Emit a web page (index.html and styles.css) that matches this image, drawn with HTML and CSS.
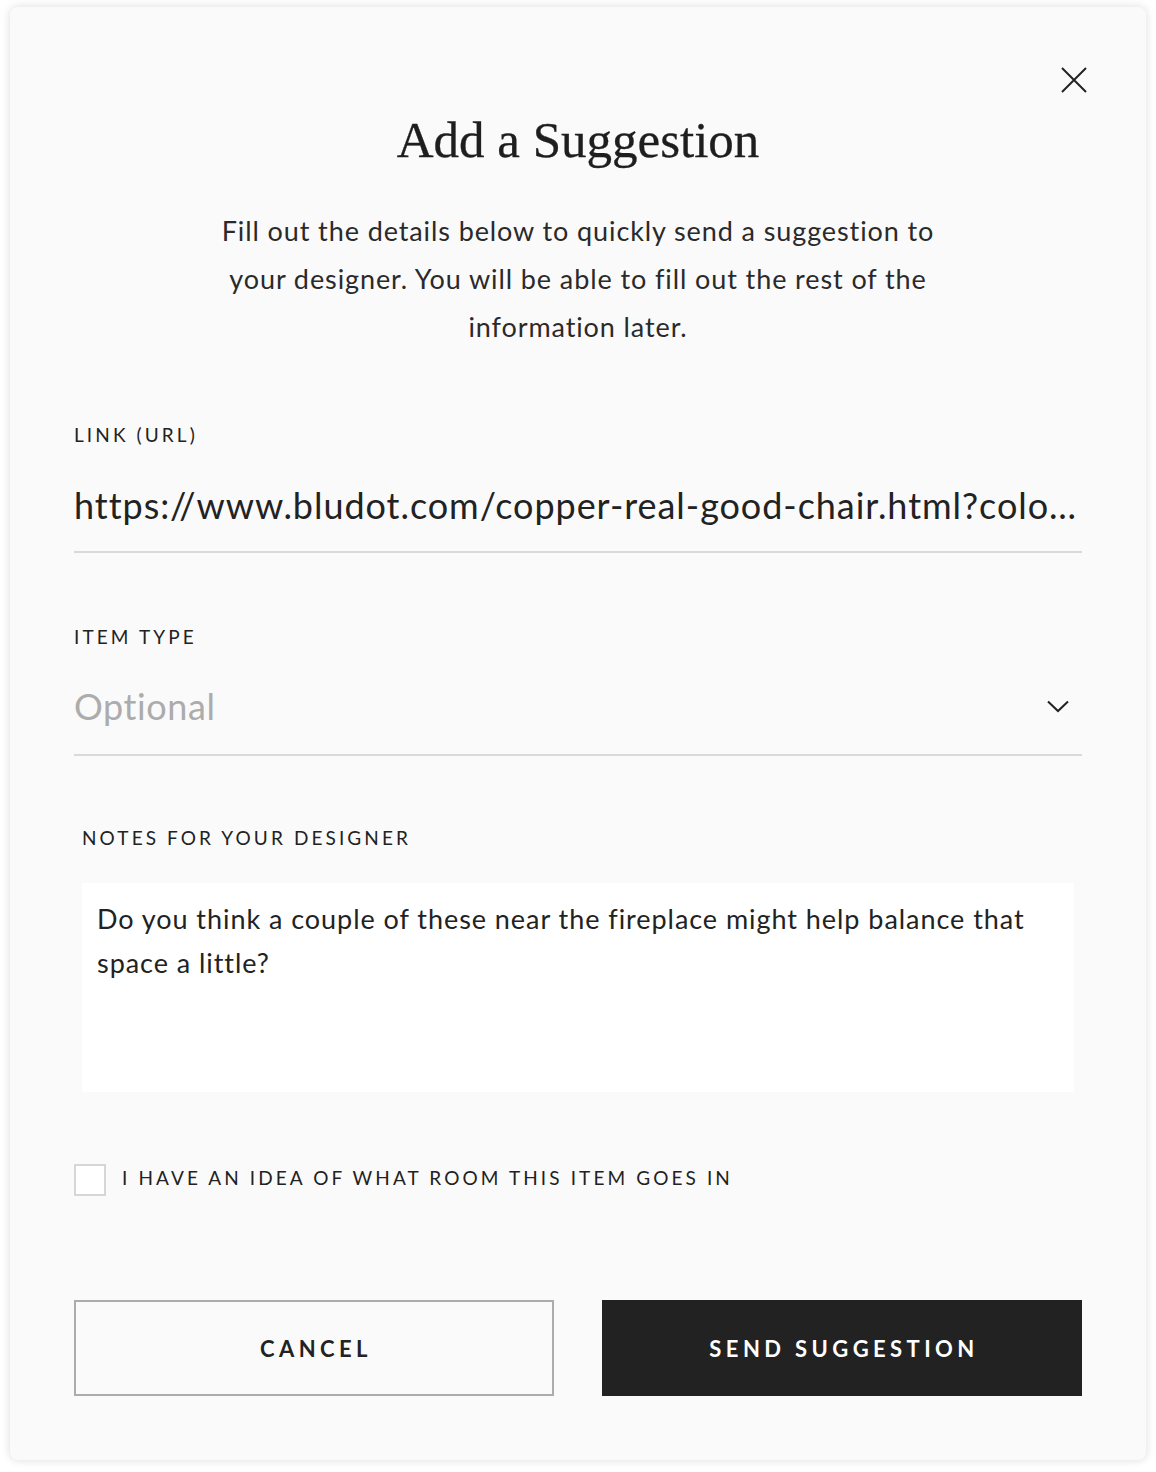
FILE: index.html
```html
<!DOCTYPE html>
<html lang="en">
<head>
<meta charset="utf-8">
<title>Add a Suggestion</title>
<link rel="stylesheet" href="styles.css">
</head>
<body>
<div class="modal">
  <button class="close" aria-label="Close">
    <svg width="26" height="26" viewBox="0 0 26 26"><path d="M1 1 L25 25 M25 1 L1 25" stroke="#222" stroke-width="2" fill="none"/></svg>
  </button>
  <h1 class="title">Add a Suggestion</h1>
  <p class="intro">Fill out the details below to quickly send a suggestion to your designer. You will be able to fill out the rest of the information later.</p>

  <div class="field">
    <div class="label">LINK (URL)</div>
    <div class="input">https://www.bludot.com/copper-real-good-chair.html?color=copper&amp;size=standard</div>
  </div>

  <div class="field field-type">
    <div class="label">ITEM TYPE</div>
    <div class="input select">
      <span class="placeholder">Optional</span>
      <svg class="chevron" width="22" height="13" viewBox="0 0 22 13"><path d="M1 1.5 L11 11 L21 1.5" stroke="#222" stroke-width="2" fill="none"/></svg>
    </div>
  </div>

  <div class="notes">
    <div class="label">NOTES FOR YOUR DESIGNER</div>
    <div class="textarea">Do you think a couple of these near the fireplace might help balance that space a little?</div>
  </div>

  <label class="check">
    <span class="box"></span>
    <span class="check-text">I HAVE AN IDEA OF WHAT ROOM THIS ITEM GOES IN</span>
  </label>

  <div class="actions">
    <button class="btn btn-outline">CANCEL</button>
    <button class="btn btn-solid">SEND SUGGESTION</button>
  </div>
</div>
</body>
</html>
```

FILE: styles.css
```css
html, body {
  margin: 0;
  padding: 0;
  background: #ffffff;
}
body {
  padding: 7px 10px 12px 10px;
  font-family: Lato, "Noto Sans", sans-serif;
  color: #222;
}
.modal {
  position: relative;
  box-sizing: border-box;
  width: 1136px;
  height: 1453px;
  background: #fafafa;
  border-radius: 8px;
  box-shadow: 0 0 10px rgba(0,0,0,0.14);
  padding: 103px 64px 64px 64px;
  display: flex;
  flex-direction: column;
}
.close {
  position: absolute;
  top: 60px;
  right: 59px;
  width: 26px;
  height: 26px;
  padding: 0;
  border: 0;
  background: none;
  display: block;
}
.close svg { display: block; }
.title {
  margin: 0;
  font-family: "Liberation Serif", serif;
  font-weight: 400;
  font-size: 51px;
  line-height: 60px;
  text-align: center;
  color: #1e1e1e;
  -webkit-text-stroke: 0.3px #1e1e1e;
}
.intro {
  margin: 37px auto 0 auto;
  width: 740px;
  font-size: 27px;
  letter-spacing: 0.9px;
  line-height: 48px;
  text-align: center;
  color: #2a2a2a;
}
.field {
  margin-top: 72px;
}
.field-type {
  margin-top: 72px;
}
.label {
  font-size: 19px;
  line-height: 24px;
  letter-spacing: 3.1px;
  color: #222;
}
.input {
  margin-top: 36px;
  font-size: 36px;
  letter-spacing: 0.95px;
  line-height: 44px;
  padding-bottom: 24px;
  border-bottom: 2px solid #d9d9d9;
  white-space: nowrap;
  overflow: hidden;
  text-overflow: ellipsis;
  color: #222;
}
.select {
  display: flex;
  align-items: center;
  justify-content: space-between;
  line-height: 42px;
  padding-bottom: 27px;
  letter-spacing: 0.6px;
}
.placeholder {
  color: #acacac;
}
.chevron {
  margin-right: 13px;
}
.notes {
  margin-top: 70px;
  padding: 0 8px;
}
.textarea {
  margin-top: 33px;
  box-sizing: border-box;
  height: 209px;
  background: #ffffff;
  padding: 14px 15px;
  font-size: 27px;
  letter-spacing: 0.95px;
  line-height: 44px;
  color: #222;
}
.check {
  margin-top: 72px;
  display: flex;
  align-items: center;
  gap: 16px;
}
.box {
  box-sizing: border-box;
  width: 32px;
  height: 32px;
  background: #fff;
  border: 2px solid #d6d6d6;
}
.check-text {
  font-size: 19px;
  line-height: 24px;
  padding-bottom: 5px;
  letter-spacing: 3.1px;
  color: #222;
}
.actions {
  margin-top: 104px;
  display: flex;
  gap: 48px;
}
.btn {
  flex: 1 1 0;
  width: 0;
  box-sizing: border-box;
  height: 96px;
  font-family: Lato, "Noto Sans", sans-serif;
  font-weight: 700;
  font-size: 22px;
  letter-spacing: 4.4px;
  padding: 0 0 0 4px;
  cursor: pointer;
}
.btn-outline {
  background: #fafafa;
  border: 2px solid #acacac;
  color: #222;
}
.btn-solid {
  background: #222;
  border: 2px solid #222;
  color: #fff;
}
```
